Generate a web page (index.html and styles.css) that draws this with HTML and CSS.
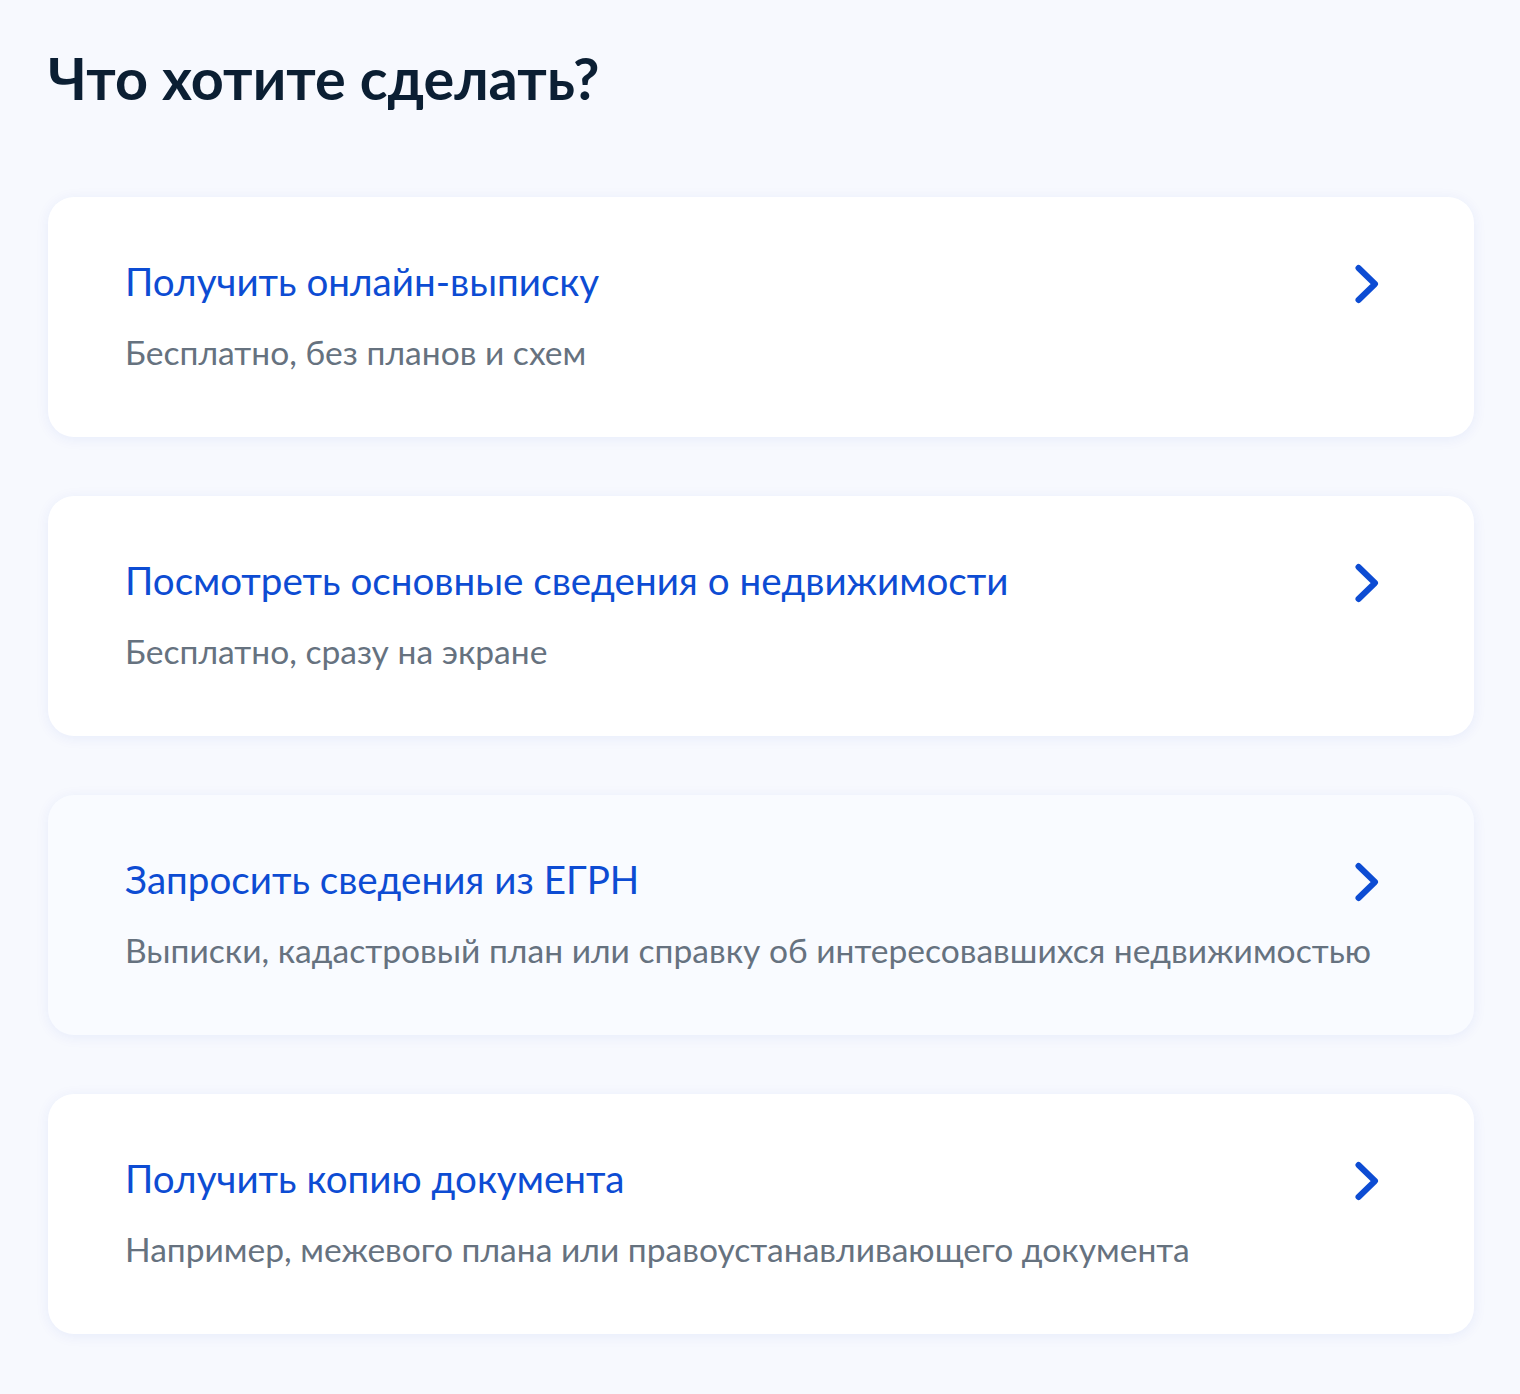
FILE: index.html
```html
<!DOCTYPE html>
<html>
<head>
  <meta charset="UTF-8">
  <title>Что хотите сделать?</title>
  <link rel="stylesheet" href="styles.css">
</head>
<body>
  <div class="page-container">
    <h1 class="page-title">Что хотите сделать?</h1>

    <div class="action-list">
      <a class="card" href="#">
        <div class="card-head">
          <div class="card-title">Получить онлайн-выписку</div>
          <svg class="chevron" viewBox="0 0 24 40" width="24" height="40"><path d="M3.5 4 L20 20 L3.5 36" /></svg>
        </div>
        <div class="card-subtitle">Бесплатно, без планов и схем</div>
      </a>

      <a class="card" href="#">
        <div class="card-head">
          <div class="card-title">Посмотреть основные сведения о недвижимости</div>
          <svg class="chevron" viewBox="0 0 24 40" width="24" height="40"><path d="M3.5 4 L20 20 L3.5 36" /></svg>
        </div>
        <div class="card-subtitle">Бесплатно, сразу на экране</div>
      </a>

      <a class="card card-hover" href="#">
        <div class="card-head">
          <div class="card-title">Запросить сведения из ЕГРН</div>
          <svg class="chevron" viewBox="0 0 24 40" width="24" height="40"><path d="M3.5 4 L20 20 L3.5 36" /></svg>
        </div>
        <div class="card-subtitle">Выписки, кадастровый план или справку об интересовавшихся недвижимостью</div>
      </a>

      <a class="card" href="#">
        <div class="card-head">
          <div class="card-title">Получить копию документа</div>
          <svg class="chevron" viewBox="0 0 24 40" width="24" height="40"><path d="M3.5 4 L20 20 L3.5 36" /></svg>
        </div>
        <div class="card-subtitle">Например, межевого плана или правоустанавливающего документа</div>
      </a>
    </div>
  </div>
</body>
</html>
```

FILE: styles.css
```css
body {
  font-family: Lato, "Noto Sans", sans-serif;
  margin: 0;
  padding: 0;
  background-color: #f7f9fe;
  color: #0b1f33;
  min-height: 100vh;
}

.page-container {
  padding: 44px 46px 60px 48px;
}

.page-title {
  font-size: 57.6px;
  font-weight: 700;
  line-height: 68px;
  margin: 0 0 85px 0;
  color: #0b1f33;
}

.action-list {
  display: flex;
  flex-direction: column;
  gap: 59px;
}

.card {
  display: flex;
  flex-direction: column;
  gap: 27px;
  height: 240px;
  box-sizing: border-box;
  padding: 60px 95px 0 77px;
  background-color: #ffffff;
  border-radius: 26px;
  box-shadow: 0 2px 14px rgba(0, 60, 200, 0.07);
  text-decoration: none;
}

.card-hover {
  background-color: #f9fbff;
}

.card-head {
  display: flex;
  align-items: flex-start;
  justify-content: space-between;
}

.card-title {
  font-size: 38.6px;
  line-height: 48px;
  color: #0d4cd3;
}

.card-subtitle {
  font-size: 33.6px;
  line-height: 40px;
  color: #66727f;
  white-space: nowrap;
}

.chevron {
  flex-shrink: 0;
  margin-top: 7px;
  fill: none;
  stroke: #0d4cd3;
  stroke-width: 6;
  stroke-linecap: round;
  stroke-linejoin: round;
}
```
